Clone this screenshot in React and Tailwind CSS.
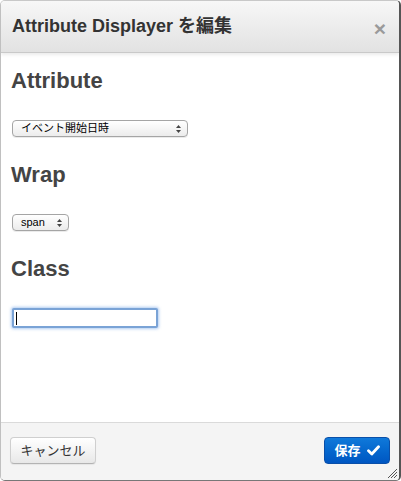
import React from 'react';

const FONT = { fontFamily: '"Liberation Sans", "Noto Sans CJK JP", sans-serif' };

function SelectBox({ label, width }) {
  return (
    <div
      className={`relative flex h-[17px] items-center rounded-[4px] border border-[#a5a5a5] bg-gradient-to-b from-white to-[#ececec] pl-[8px] text-[11px] leading-none text-black shadow-[0_1px_0_rgba(0,0,0,0.08)] ${width}`}
    >
      <span>{label}</span>
      {/* up/down arrows */}
      <svg className="absolute right-[6px] top-[4px]" width="5" height="8" viewBox="0 0 5 8">
        <path d="M2.5 0 L5 3 L0 3 Z" fill="#444" />
        <path d="M2.5 8 L5 5 L0 5 Z" fill="#444" />
      </svg>
    </div>
  );
}

function Heading({ children }) {
  return <h3 className="h-[28px] text-[22px] font-bold leading-[28px] text-[#444]">{children}</h3>;
}

export default function App() {
  return (
    <div
      style={FONT}
      className="relative flex h-[481px] w-[401px] flex-col overflow-hidden rounded-t-[5px] rounded-b-[5px] border-l border-r-2 border-t border-b border-l-[#c0c0c0] border-r-[#555] border-t-[#c8c8c8] border-b-[#777] bg-white"
    >
      {/* header */}
      <header className="flex h-[52px] shrink-0 items-center justify-between border-b border-[#c9c9c9] bg-gradient-to-b from-[#f7f7f7] to-[#e2e2e2] pl-[11px] pr-[13px] shadow-[0_2px_3px_rgba(0,0,0,0.08)]">
        <h1 className="text-[18px] font-bold text-[#333]">Attribute Displayer を編集</h1>
        <span className="mt-[3px] text-[21px] font-bold leading-none text-[#9a9a9a]">×</span>
      </header>

      {/* body */}
      <div className="flex-1 px-[10px] pt-[14px]">
        <Heading>Attribute</Heading>
        <div className="mt-[25px] pl-px">
          <SelectBox label="イベント開始日時" width="w-[176px]" />
        </div>

        <div className="mt-[24px]">
          <Heading>Wrap</Heading>
        </div>
        <div className="mt-[25px] pl-px">
          <SelectBox label="span" width="w-[57px]" />
        </div>

        <div className="mt-[24px]">
          <Heading>Class</Heading>
        </div>
        <div className="mt-[25px] pl-px">
          <div className="relative h-[20px] w-[146px] rounded-[2px] border-2 border-[#7aa3d6] bg-white shadow-[0_0_3px_1px_rgba(110,160,230,0.55)]">
            <span className="absolute left-[2px] top-[2px] h-[13px] w-px bg-black" />
          </div>
        </div>
      </div>

      {/* footer */}
      <footer className="flex h-[58px] shrink-0 items-start justify-between border-t border-[#dadada] bg-[#f4f4f4] pl-[9px] pr-[9px] pt-[14px]">
        <button className="flex h-[27px] w-[86px] items-center justify-center rounded-[4px] border border-[#cfcfcf] border-b-[#b3b3b3] bg-gradient-to-b from-white to-[#e8e8e8] text-[13px] text-[#333] shadow-[0_1px_1px_rgba(0,0,0,0.06)]">
          キャンセル
        </button>
        <button className="flex h-[27px] w-[66px] items-center justify-center gap-[6px] rounded-[4px] border border-[#0a4fa8] bg-gradient-to-b from-[#1079da] to-[#0056c2] text-[13px] font-bold text-white">
          保存
          <svg width="13" height="11" viewBox="0 0 13 11">
            <path d="M1.5 5.8 L4.8 9 L11.5 1.8" fill="none" stroke="#fff" strokeWidth="2.8" strokeLinecap="round" strokeLinejoin="round" />
          </svg>
        </button>
      </footer>

      {/* resize grip */}
      <svg className="absolute bottom-[1px] right-[1px]" width="11" height="11" viewBox="0 0 11 11">
        <path d="M1 10 L10 1 M4 10 L10 4 M7 10 L10 7" stroke="#555" strokeWidth="1" />
      </svg>
    </div>
  );
}
